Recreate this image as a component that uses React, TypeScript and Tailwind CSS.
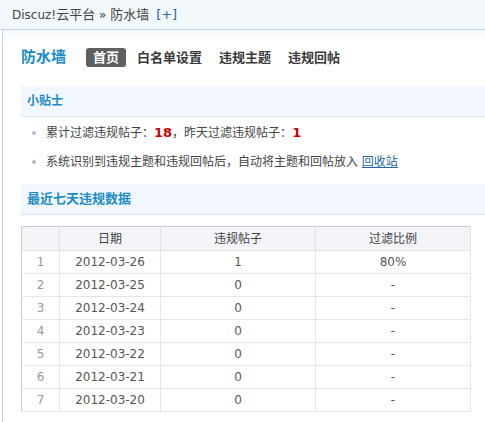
const rows = [
  { date: '2012-03-26', count: '1', ratio: '80%' },
  { date: '2012-03-25', count: '0', ratio: '-' },
  { date: '2012-03-24', count: '0', ratio: '-' },
  { date: '2012-03-23', count: '0', ratio: '-' },
  { date: '2012-03-22', count: '0', ratio: '-' },
  { date: '2012-03-21', count: '0', ratio: '-' },
  { date: '2012-03-20', count: '0', ratio: '-' },
]

const font = { fontFamily: '"DejaVu Sans", "Noto Sans CJK SC", sans-serif' }

export default function App() {
  return (
    <div
      className="w-[485px] h-[422px] overflow-hidden bg-white text-[12px] text-[#333]"
      style={font}
    >
      {/* Breadcrumb bar */}
      <div className="h-[30px] flex items-center pl-3 bg-[#f2f7fb] border-b border-[#c2d5e3] text-[#444] text-[12px]">
        <span>
          Discuz!<span className="text-[13px]">云平台</span> » <span className="text-[13px]">防水墙</span>
        </span>
        <span className="ml-[7px] text-[#2366a8] text-[13px]">[+]</span>
      </div>

      <div className="h-[392px] ml-[2px] border-l border-[#c2d5e3] bg-gradient-to-b from-[#f5f9fc] to-white to-[12px] pl-[18px]">
        {/* Title + tabs */}
        <div className="flex items-center pt-[18px] h-[37px]">
          <h1 className="text-[15px] font-bold text-[#1a8dc7] mr-[20px]">防水墙</h1>
          <nav className="flex items-center text-[13px] font-bold text-[#3a3a3a]">
            <span className="bg-[#5f5f5f] text-white rounded-[3px] px-[7px] leading-[19px]">首页</span>
            <span className="ml-[11px]">白名单设置</span>
            <span className="ml-[17px]">违规主题</span>
            <span className="ml-[17px]">违规回帖</span>
          </nav>
        </div>

        {/* Tips */}
        <div className="mt-[19px] h-[31px] flex items-center pl-[6px] bg-[#f2f7fd] border-b border-dotted border-[#cfdbe6] font-bold text-[12px] text-[#1a8dc7]">
          小贴士
        </div>
        <ul className="pl-[11px] text-[#444]">
          <li className="flex items-center h-[30px] pt-[2px]">
            <span className="w-[4px] h-[4px] rounded-full bg-[#bbb] mr-[10px]" />
            <span>
              累计过滤违规帖子：<b className="text-[#c00] text-[13px]">18</b>，昨天过滤违规帖子：
              <b className="text-[#c00] text-[13px]">1</b>
            </span>
          </li>
          <li className="flex items-center h-[30px]">
            <span className="w-[4px] h-[4px] rounded-full bg-[#bbb] mr-[10px]" />
            <span>
              系统识别到违规主题和违规回帖后，自动将主题和回帖放入{' '}
              <a className="text-[#2366a8] underline">回收站</a>
            </span>
          </li>
        </ul>

        {/* Stats */}
        <div className="mt-[7px] h-[31px] flex items-center pl-[6px] bg-[#f2f7fd] border-b border-dotted border-[#cfdbe6] font-bold text-[13px] text-[#1a8dc7]">
          最近七天违规数据
        </div>

        <table className="mt-[11px] w-[449px] border-collapse text-[12px] text-[#555] table-fixed">
          <colgroup>
            <col className="w-[38px]" />
            <col className="w-[101px]" />
            <col className="w-[155px]" />
            <col className="w-[155px]" />
          </colgroup>
          <thead>
            <tr className="h-[24px] bg-[#f3f3f8] text-[#444]">
              <th className="font-normal border border-[#dfe3ea] border-l-[#c5ccd6] border-t-[#c5ccd6]" />
              <th className="font-normal border border-[#dfe3ea] border-t-[#c5ccd6]">日期</th>
              <th className="font-normal border border-[#dfe3ea] border-t-[#c5ccd6]">违规帖子</th>
              <th className="font-normal border border-[#dfe3ea] border-t-[#c5ccd6]">过滤比例</th>
            </tr>
          </thead>
          <tbody>
            {rows.map((r, i) => (
              <tr key={r.date} className="h-[23px]">
                <td className="text-center text-[#999] border border-[#e3e5ea] border-l-[#c5ccd6]">{i + 1}</td>
                <td className="text-center border border-[#e3e5ea]">{r.date}</td>
                <td className="text-center border border-[#e3e5ea]">{r.count}</td>
                <td className="text-center border border-[#e3e5ea]">{r.ratio}</td>
              </tr>
            ))}
          </tbody>
        </table>
      </div>
    </div>
  )
}
